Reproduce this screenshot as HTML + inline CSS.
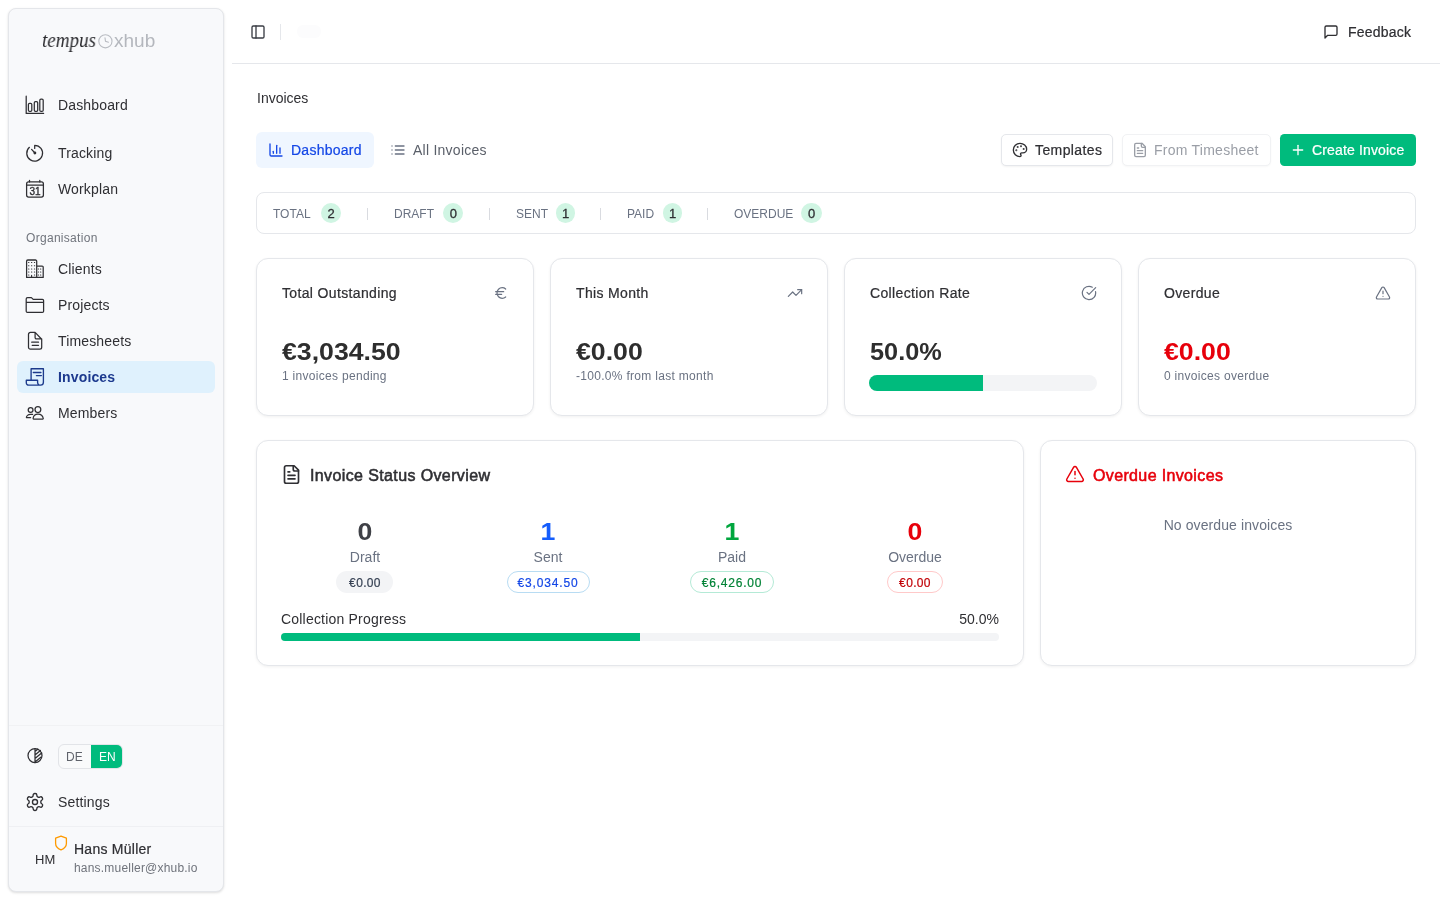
<!DOCTYPE html>
<html><head><meta charset="utf-8">
<style>
*{box-sizing:border-box;margin:0;padding:0}
html,body{width:1440px;height:900px;overflow:hidden;background:#fff;font-family:"Liberation Sans",sans-serif;color:#2e2e2e}
.a{position:absolute}
.t{position:absolute;white-space:nowrap;line-height:1;will-change:transform}
svg{position:absolute;overflow:visible;will-change:transform}
.sb{left:8px;top:8px;width:216px;height:884px;background:#f8f9fb;border:1px solid #e4e6ea;border-radius:8px;box-shadow:0 1px 3px rgba(0,0,0,.1),0 1px 2px rgba(0,0,0,.04)}
.nav{font-size:14px;color:#2f2f33;left:57.5px;letter-spacing:.15px}
.card{position:absolute;background:#fff;border:1px solid #e5e7eb;border-radius:12px;box-shadow:0 1px 3px rgba(0,0,0,.06)}
.m{-webkit-text-stroke:.22px currentColor}
.sbd{-webkit-text-stroke:.55px currentColor}
.ic{fill:none;stroke:currentColor;stroke-width:2;stroke-linecap:round;stroke-linejoin:round}
.si{fill:none;stroke:#2f2f33;stroke-width:1.25;stroke-linecap:round;stroke-linejoin:round}
</style></head>
<body>
<!-- SIDEBAR -->
<div class="a sb"></div>
<div class="t" style="left:41.5px;top:29.5px;font-family:'Liberation Serif',serif;font-style:italic;font-size:20px;color:#2a2a2e;transform:scaleX(.95);transform-origin:0 0">tempus</div>
<svg style="left:98px;top:33.5px" width="15" height="15" viewBox="0 0 15 15"><g fill="none" stroke="#b9bcc2" stroke-width="1.1" stroke-linecap="round"><circle cx="7.4" cy="7.3" r="6.6"/><path d="M7 3.8L7.5 7.3 10.5 8.2"/></g></svg>
<div class="t" style="left:114px;top:31px;font-size:19px;color:#b4b7bd;font-weight:normal">xhub</div>

<!-- nav icons -->
<svg class="si" style="left:22px;top:92px" width="26" height="26" viewBox="0 0 26 26"><path d="M4.2 4.2V21.4H21.6"/><rect x="6.4" y="11.4" width="3.4" height="8" rx="1.2"/><rect x="12.3" y="9.5" width="3.4" height="9.9" rx="1.2"/><rect x="17.8" y="7" width="3.4" height="12.4" rx="1.2"/></svg>
<div class="t nav" style="top:98.15px">Dashboard</div>
<svg class="si" style="left:22px;top:140px" width="26" height="26" viewBox="0 0 26 26"><path d="M12.7 8.4V5.3A7.9 7.9 0 1 1 7.4 7.3"/><path d="M9.6 9.4L12.9 13"/><circle cx="12.9" cy="13" r=".8" fill="#2f2f33"/></svg>
<div class="t nav" style="top:146.15px">Tracking</div>
<svg class="si" style="left:22px;top:176px" width="26" height="26" viewBox="0 0 26 26"><rect x="4.6" y="5.9" width="16.8" height="15.2" rx="2"/><path d="M4.6 9.2H21.4M7.5 4.3v1.6M17.8 4.3v1.6"/><text x="13.1" y="18.9" text-anchor="middle" font-family="Liberation Sans" font-size="10" fill="#2f2f33" stroke="#2f2f33" stroke-width=".35">31</text></svg>
<div class="t nav" style="top:182.15px">Workplan</div>

<div class="t" style="left:25.5px;top:231.8px;font-size:12px;color:#70747c;letter-spacing:.3px">Organisation</div>

<svg class="si" style="left:22px;top:256px" width="26" height="26" viewBox="0 0 26 26"><path d="M4.6 21.4V5.2a1.2 1.2 0 0 1 1.2-1.2h7.7a1.2 1.2 0 0 1 1.2 1.2V21.4M14.7 10.1h5.4a1.1 1.1 0 0 1 1.1 1.1v10.2H4.6"/><g stroke-width="1.1"><path d="M6.6 6.5h.3M9.5 6.5h.3M12.4 6.5h.3M6.6 9.8h.3M9.5 9.8h.3M12.4 9.8h.3M6.6 13h.3M9.5 13h.3M12.4 13h.3M6.6 16h.3M9.5 16h.3M12.4 16h.3M6.6 19h.3M12.4 19h.3M16.3 13h.3M18.5 13h.3M16.3 16h.3M18.5 16h.3M16.3 19h.3M18.5 19h.3M9.6 19.2v2"/></g></svg>
<div class="t nav" style="top:261.85px">Clients</div>
<svg class="si" style="left:22px;top:292px" width="26" height="26" viewBox="0 0 26 26"><path d="M4.2 19.2V7a1.4 1.4 0 0 1 1.4-1.4h3.8l1.8 1.8h9.2a1.2 1.2 0 0 1 1.2 1.2v10.6a1.2 1.2 0 0 1-1.2 1.2H5.4a1.2 1.2 0 0 1-1.2-1.2zM4.2 10.4H21.6"/></svg>
<div class="t nav" style="top:297.85px">Projects</div>
<svg class="si" style="left:22px;top:328px" width="26" height="26" viewBox="0 0 26 26"><path d="M13.1 4.4H8.4a1.9 1.9 0 0 0-1.9 1.9v13a1.9 1.9 0 0 0 1.9 1.9h9.4a1.9 1.9 0 0 0 1.9-1.9v-8.1zM13.1 4.4v5.2a1.3 1.3 0 0 0 1.3 1.3h5.3M9.7 14.2h6.8M10.2 17.3h6.3"/></svg>
<div class="t nav" style="top:333.85px">Timesheets</div>

<div class="a" style="left:17px;top:361px;width:198px;height:32px;background:#dff1fd;border-radius:6px"></div>
<svg class="si" style="left:22px;top:364px;stroke:#1c3a8c;stroke-width:1.35" width="26" height="26" viewBox="0 0 26 26"><path d="M9.1 16V4.7H21.4V18.2a2.9 2.9 0 0 1-2.9 2.9H6.6A2.3 2.3 0 0 1 4.3 18.8V16.2H15.6v2.2a2.7 2.7 0 0 0 2.9 2.7"/><path d="M11.3 8.5h7.6M14.4 11.6h5"/></svg>
<div class="t nav" style="top:369.85px;color:#1c398e;font-weight:bold">Invoices</div>
<svg class="si" style="left:22px;top:400px" width="26" height="26" viewBox="0 0 26 26"><circle cx="8.6" cy="10" r="2.4"/><circle cx="15.9" cy="9.6" r="2.9"/><path d="M10.6 14.4H8.4C6 14.4 4.4 15.9 4.4 17.6H8.6M11.1 18.5c.3-2.6 2.3-4.3 4.9-4.3s4.8 1.7 5.3 4.3c0 .3-.2.5-.5.5H11.5c-.3 0-.4-.2-.4-.5z"/></svg>
<div class="t nav" style="top:405.85px">Members</div>

<!-- sidebar footer -->
<div class="a" style="left:9px;top:725px;width:214px;height:1px;background:#f1f2f4"></div>
<svg class="si" style="left:22px;top:742px" width="26" height="26" viewBox="0 0 26 26"><circle cx="13" cy="13.6" r="7"/><path d="M13 6.6v14M13 9.5l2.7-2.3M13 13l5.4-4.6M13 16.5l6.6-5.6M13.6 19.6l5.2-4.4"/></svg>
<div class="a" style="left:57.5px;top:743.5px;width:65px;height:25px;border:1px solid #e2e4e8;border-radius:6px;background:#f9fafb;overflow:hidden">
  <div class="a" style="left:32px;top:-1px;width:33px;height:25px;background:#00bb7d;border-radius:0 6px 6px 0"></div>
</div>
<div class="t" style="left:66.4px;top:750.5px;font-size:12px;color:#5f636b">DE</div>
<div class="t" style="left:98.5px;top:750.5px;font-size:12px;color:#fff">EN</div>
<svg class="si" style="left:22px;top:789px" width="26" height="26" viewBox="0 0 24 24" ><g transform="translate(12 12) scale(0.78) translate(-12 -12)" stroke-width="1.6"><path d="M12.22 2h-.44a2 2 0 0 0-2 2v.18a2 2 0 0 1-1 1.73l-.43.25a2 2 0 0 1-2 0l-.15-.08a2 2 0 0 0-2.73.73l-.22.38a2 2 0 0 0 .73 2.73l.15.1a2 2 0 0 1 1 1.72v.51a2 2 0 0 1-1 1.74l-.15.09a2 2 0 0 0-.73 2.73l.22.38a2 2 0 0 0 2.73.73l.15-.08a2 2 0 0 1 2 0l.43.25a2 2 0 0 1 1 1.73V20a2 2 0 0 0 2 2h.44a2 2 0 0 0 2-2v-.18a2 2 0 0 1 1-1.730l.43-.25a2 2 0 0 1 2 0l.15.08a2 2 0 0 0 2.73-.73l.22-.39a2 2 0 0 0-.73-2.73l-.15-.08a2 2 0 0 1-1-1.74v-.5a2 2 0 0 1 1-1.74l.15-.09a2 2 0 0 0 .73-2.73l-.22-.38a2 2 0 0 0-2.73-.73l-.15.08a2 2 0 0 1-2 0l-.43-.25a2 2 0 0 1-1-1.73V4a2 2 0 0 0-2-2z"/><circle cx="12" cy="12" r="3"/></g></svg>
<div class="t nav" style="top:794.95px">Settings</div>
<div class="a" style="left:9px;top:826px;width:214px;height:1px;background:#eff0f3"></div>
<div class="t" style="left:34.5px;top:852.8px;font-size:13px;color:#2f2f33">HM</div>
<svg style="left:54px;top:835px" width="14" height="16" viewBox="0 0 14 16"><path d="M7 1.2L12.4 3.2V8.4C12.4 11.4 10 13.6 7 14.8 4 13.6 1.6 11.4 1.6 8.4V3.2z" fill="none" stroke="#fe9a00" stroke-width="1.3" stroke-linejoin="round"/></svg>
<div class="t m" style="left:73.6px;top:842px;font-size:14px;color:#2f2f33;letter-spacing:.25px">Hans Müller</div>
<div class="t" style="left:73.6px;top:862.4px;font-size:12px;color:#6f737b;letter-spacing:.2px">hans.mueller@xhub.io</div>

<!-- HEADER -->
<div class="a" style="left:232px;top:63px;width:1208px;height:1px;background:#e5e7eb"></div>
<svg class="ic" style="left:250px;top:23.5px;color:#3a3d44;stroke-width:2" width="16" height="16" viewBox="0 0 24 24"><rect width="18" height="18" x="3" y="3" rx="2"/><path d="M9 3v18"/></svg>
<div class="a" style="left:280px;top:23.5px;width:1px;height:16px;background:#e5e7eb"></div>
<div class="a" style="left:297px;top:25px;width:24px;height:13px;background:#fcfcfd;border-radius:6px"></div>
<svg class="ic" style="left:1323px;top:23.5px;color:#2f2f33" width="16" height="16" viewBox="0 0 24 24"><path d="M21 15a2 2 0 0 1-2 2H7l-4 4V5a2 2 0 0 1 2-2h14a2 2 0 0 1 2 2z"/></svg>
<div class="t m" style="left:1348px;top:24.7px;font-size:14px;color:#2f2f33;letter-spacing:.2px">Feedback</div>

<!-- PAGE TITLE -->
<div class="t" style="left:256.5px;top:91px;font-size:14px;color:#2f2f33">Invoices</div>

<!-- TABS -->
<div class="a" style="left:256px;top:132px;width:118px;height:36px;background:#eff6ff;border-radius:6px"></div>
<svg class="ic" style="left:267.7px;top:142.4px;color:#1447e6" width="16" height="16" viewBox="0 0 24 24"><path d="M3 3v16a2 2 0 0 0 2 2h16"/><path d="M18 17V9"/><path d="M13 17V5"/><path d="M8 17v-3"/></svg>
<div class="t m" style="left:290.5px;top:143px;font-size:14px;color:#1447e6;letter-spacing:.25px">Dashboard</div>
<svg class="ic" style="left:390px;top:142px;color:#6a7282" width="16" height="16" viewBox="0 0 24 24"><path d="M3 12h.01"/><path d="M3 18h.01"/><path d="M3 6h.01"/><path d="M8 12h13"/><path d="M8 18h13"/><path d="M8 6h13"/></svg>
<div class="t" style="left:412.8px;top:143px;font-size:14px;color:#5a5f69;letter-spacing:.25px">All Invoices</div>

<!-- ACTION BUTTONS -->
<div class="a" style="left:1000.5px;top:134px;width:112.5px;height:32px;border:1px solid #e5e7eb;border-radius:5px;background:#fff;box-shadow:0 1px 2px rgba(0,0,0,.05)"></div>
<svg class="ic" style="left:1011.5px;top:142px;color:#2f2f33" width="16" height="16" viewBox="0 0 24 24"><circle cx="13.5" cy="6.5" r=".5" fill="currentColor"/><circle cx="17.5" cy="10.5" r=".5" fill="currentColor"/><circle cx="8.5" cy="7.5" r=".5" fill="currentColor"/><circle cx="6.5" cy="12.5" r=".5" fill="currentColor"/><path d="M12 2C6.5 2 2 6.5 2 12s4.5 10 10 10c.926 0 1.648-.746 1.648-1.688 0-.437-.18-.835-.437-1.125-.29-.289-.438-.652-.438-1.125a1.64 1.64 0 0 1 1.668-1.668h1.996c3.051 0 5.555-2.503 5.555-5.554C21.965 6.012 17.461 2 12 2z"/></svg>
<div class="t m" style="left:1034.6px;top:143px;font-size:14px;color:#2f2f33;letter-spacing:.4px">Templates</div>

<div class="a" style="left:1121.5px;top:134px;width:149.5px;height:32px;border:1px solid #f1f2f4;border-radius:5px;background:#fff;box-shadow:0 1px 2px rgba(0,0,0,.03)"></div>
<svg class="ic" style="left:1132px;top:142px;color:#9a9ea6" width="16" height="16" viewBox="0 0 24 24"><path d="M15 2H6a2 2 0 0 0-2 2v16a2 2 0 0 0 2 2h12a2 2 0 0 0 2-2V7Z"/><path d="M14 2v4a2 2 0 0 0 2 2h4"/><path d="M10 9H8"/><path d="M16 13H8"/><path d="M16 17H8"/></svg>
<div class="t" style="left:1154.4px;top:143px;font-size:14px;color:#9a9ea6;letter-spacing:.25px">From Timesheet</div>

<div class="a" style="left:1279.5px;top:134px;width:136.5px;height:32px;border-radius:4.5px;background:#00bb7d"></div>
<svg class="ic" style="left:1290px;top:142px;color:#fff" width="16" height="16" viewBox="0 0 24 24"><path d="M5 12h14"/><path d="M12 5v14"/></svg>
<div class="t m" style="left:1312px;top:143px;font-size:14px;color:#fff;letter-spacing:.15px">Create Invoice</div>

<!-- STATS BAR -->
<div class="a" style="left:256px;top:192px;width:1160px;height:42px;border:1px solid #e5e7eb;border-radius:8px;background:#fff"></div>
<div class="t" style="left:273.3px;top:207.8px;font-size:12px;color:#6a7282;letter-spacing:0px">TOTAL</div>
<div class="a" style="left:321.2px;top:203px;width:20.1px;height:20px;border-radius:10px;background:#d0f5e3"></div>
<div class="t" style="left:321.2px;top:207px;width:20.1px;text-align:center;font-size:13px;color:#2f2f33;-webkit-text-stroke:.3px #2f2f33">2</div>
<div class="t" style="left:393.7px;top:207.8px;font-size:12px;color:#6a7282;letter-spacing:0px">DRAFT</div>
<div class="a" style="left:442.5px;top:203px;width:20.8px;height:20px;border-radius:10px;background:#d0f5e3"></div>
<div class="t" style="left:442.5px;top:207px;width:20.8px;text-align:center;font-size:13px;color:#2f2f33;-webkit-text-stroke:.3px #2f2f33">0</div>
<div class="t" style="left:515.6px;top:207.8px;font-size:12px;color:#6a7282;letter-spacing:0px">SENT</div>
<div class="a" style="left:555.7px;top:203px;width:19.4px;height:20px;border-radius:10px;background:#d0f5e3"></div>
<div class="t" style="left:555.7px;top:207px;width:19.4px;text-align:center;font-size:13px;color:#2f2f33;-webkit-text-stroke:.3px #2f2f33">1</div>
<div class="t" style="left:626.7px;top:207.8px;font-size:12px;color:#6a7282;letter-spacing:0px">PAID</div>
<div class="a" style="left:662.8px;top:203px;width:19.4px;height:20px;border-radius:10px;background:#d0f5e3"></div>
<div class="t" style="left:662.8px;top:207px;width:19.4px;text-align:center;font-size:13px;color:#2f2f33;-webkit-text-stroke:.3px #2f2f33">1</div>
<div class="t" style="left:734px;top:207.8px;font-size:12px;color:#6a7282;letter-spacing:0px">OVERDUE</div>
<div class="a" style="left:801px;top:203px;width:21.2px;height:20px;border-radius:10px;background:#d0f5e3"></div>
<div class="t" style="left:801px;top:207px;width:21.2px;text-align:center;font-size:13px;color:#2f2f33;-webkit-text-stroke:.3px #2f2f33">0</div>
<div class="a" style="left:367.0px;top:208px;width:1px;height:12px;background:#d9dbe0"></div>
<div class="a" style="left:488.7px;top:208px;width:1px;height:12px;background:#d9dbe0"></div>
<div class="a" style="left:600.2px;top:208px;width:1px;height:12px;background:#d9dbe0"></div>
<div class="a" style="left:707.1px;top:208px;width:1px;height:12px;background:#d9dbe0"></div>
<div class="card" style="left:256px;top:258px;width:278px;height:158px"></div>
<div class="t m" style="left:282px;top:286.35px;font-size:14px;color:#2f2f33;letter-spacing:.35px">Total Outstanding</div>
<svg class="ic" style="left:493px;top:285px;color:#6a7282;stroke-width:1.8" width="16" height="16" viewBox="0 0 24 24"><path d="M4 10h12"/><path d="M4 14h9"/><path d="M19 6a7.7 7.7 0 0 0-5.2-2A7.9 7.9 0 0 0 6 12c0 4.4 3.5 8 7.8 8 2 0 3.8-.8 5.2-2"/></svg>
<div class="t" style="left:282px;top:341px;font-size:23px;font-weight:bold;color:#2e2e2e;transform:scaleX(1.16);transform-origin:0 0">€3,034.50</div>
<div class="t" style="left:282px;top:369.84px;font-size:12px;color:#6a7282;letter-spacing:.3px">1 invoices pending</div>
<div class="card" style="left:550px;top:258px;width:278px;height:158px"></div>
<div class="t m" style="left:576px;top:286.35px;font-size:14px;color:#2f2f33;letter-spacing:.35px">This Month</div>
<svg class="ic" style="left:787px;top:285px;color:#6a7282;stroke-width:1.8" width="16" height="16" viewBox="0 0 24 24"><polyline points="22 7 13.5 15.5 8.5 10.5 2 17"/><polyline points="16 7 22 7 22 13"/></svg>
<div class="t" style="left:576px;top:341px;font-size:23px;font-weight:bold;color:#2e2e2e;transform:scaleX(1.16);transform-origin:0 0">€0.00</div>
<div class="t" style="left:576px;top:369.84px;font-size:12px;color:#6a7282;letter-spacing:.3px">-100.0% from last month</div>
<div class="card" style="left:844px;top:258px;width:278px;height:158px"></div>
<div class="t m" style="left:870px;top:286.35px;font-size:14px;color:#2f2f33;letter-spacing:.35px">Collection Rate</div>
<svg class="ic" style="left:1081px;top:285px;color:#6a7282;stroke-width:1.8" width="16" height="16" viewBox="0 0 24 24"><path d="M21.801 10A10 10 0 1 1 17 3.335"/><path d="m9 11 3 3L22 4"/></svg>
<div class="t" style="left:870px;top:341px;font-size:23px;font-weight:bold;color:#2e2e2e;transform:scaleX(1.10);transform-origin:0 0">50.0%</div>
<div class="card" style="left:1138px;top:258px;width:278px;height:158px"></div>
<div class="t m" style="left:1164px;top:286.35px;font-size:14px;color:#2f2f33;letter-spacing:.35px">Overdue</div>
<svg class="ic" style="left:1375px;top:285px;color:#6a7282;stroke-width:1.8" width="16" height="16" viewBox="0 0 24 24"><path d="m21.73 18-8-14a2 2 0 0 0-3.48 0l-8 14A2 2 0 0 0 4 21h16a2 2 0 0 0 1.73-3"/><path d="M12 9v4"/><path d="M12 17h.01"/></svg>
<div class="t" style="left:1164px;top:341px;font-size:23px;font-weight:bold;color:#e7000b;transform:scaleX(1.16);transform-origin:0 0">€0.00</div>
<div class="t" style="left:1164px;top:369.84px;font-size:12px;color:#6a7282;letter-spacing:.3px">0 invoices overdue</div>
<div class="a" style="left:869px;top:375px;width:228px;height:16px;border-radius:8px;background:#f3f4f6;overflow:hidden"><div class="a" style="left:0;top:0;width:114px;height:16px;background:#00bb7d"></div></div>
<div class="card" style="left:256px;top:440px;width:768px;height:226px"></div>
<svg class="ic" style="left:280.5px;top:464.2px;color:#2f2f33;stroke-width:1.9" width="21" height="21" viewBox="0 0 24 24"><path d="M15 2H6a2 2 0 0 0-2 2v16a2 2 0 0 0 2 2h12a2 2 0 0 0 2-2V7Z"/><path d="M14 2v4a2 2 0 0 0 2 2h4"/><path d="M10 9H8"/><path d="M16 13H8"/><path d="M16 17H8"/></svg>
<div class="t sbd" style="left:309.6px;top:468px;font-size:16px;color:#2f2f33;letter-spacing:.38px">Invoice Status Overview</div>
<div class="t" style="left:304.75px;width:120px;text-align:center;top:521.4px;font-size:23px;font-weight:bold;transform:scaleX(1.16);color:#3f4147">0</div>
<div class="t" style="left:304.75px;width:120px;text-align:center;top:549.65px;font-size:14px;color:#6a7282">Draft</div>
<div class="a" style="left:336.25px;top:571px;width:57px;height:22px;border-radius:11px;background:#f3f4f6;"></div>
<div class="t" style="left:304.75px;width:120px;text-align:center;top:576.64px;font-size:12px;letter-spacing:.35px;-webkit-text-stroke:.2px currentColor;color:#364153">€0.00</div>
<div class="t" style="left:488.25px;width:120px;text-align:center;top:521.4px;font-size:23px;font-weight:bold;transform:scaleX(1.16);color:#155dfc">1</div>
<div class="t" style="left:488.25px;width:120px;text-align:center;top:549.65px;font-size:14px;color:#6a7282">Sent</div>
<div class="a" style="left:506.75px;top:571px;width:83px;height:22px;border-radius:11px;background:#fff;border:1px solid #b8dcf3;"></div>
<div class="t" style="left:488.25px;width:120px;text-align:center;top:576.64px;font-size:12px;letter-spacing:.85px;-webkit-text-stroke:.2px currentColor;color:#1447e6">€3,034.50</div>
<div class="t" style="left:671.75px;width:120px;text-align:center;top:521.4px;font-size:23px;font-weight:bold;transform:scaleX(1.16);color:#00a63e">1</div>
<div class="t" style="left:671.75px;width:120px;text-align:center;top:549.65px;font-size:14px;color:#6a7282">Paid</div>
<div class="a" style="left:689.5px;top:571px;width:84.5px;height:22px;border-radius:11px;background:#fff;border:1px solid #b4ead6;"></div>
<div class="t" style="left:671.75px;width:120px;text-align:center;top:576.64px;font-size:12px;letter-spacing:.8px;-webkit-text-stroke:.2px currentColor;color:#008236">€6,426.00</div>
<div class="t" style="left:855.25px;width:120px;text-align:center;top:521.4px;font-size:23px;font-weight:bold;transform:scaleX(1.16);color:#e7000b">0</div>
<div class="t" style="left:855.25px;width:120px;text-align:center;top:549.65px;font-size:14px;color:#6a7282">Overdue</div>
<div class="a" style="left:887.05px;top:571px;width:56.4px;height:22px;border-radius:11px;background:#fff;border:1px solid #ffc9c9;"></div>
<div class="t" style="left:855.25px;width:120px;text-align:center;top:576.64px;font-size:12px;letter-spacing:.35px;-webkit-text-stroke:.2px currentColor;color:#c10007">€0.00</div>
<div class="t" style="left:281px;top:611.8px;font-size:14px;color:#2f2f33;letter-spacing:.2px">Collection Progress</div>
<div class="t" style="left:899px;width:100px;text-align:right;top:611.8px;font-size:14px;color:#2f2f33">50.0%</div>
<div class="a" style="left:281px;top:633px;width:718px;height:8px;border-radius:4px;background:#f3f4f6;overflow:hidden"><div class="a" style="left:0;top:0;width:359px;height:8px;background:#00bb7d"></div></div>
<div class="card" style="left:1040px;top:440px;width:376px;height:226px"></div>
<svg class="ic" style="left:1064.5px;top:464px;color:#e7000b;stroke-width:1.8" width="20" height="20" viewBox="0 0 24 24"><path d="m21.73 18-8-14a2 2 0 0 0-3.48 0l-8 14A2 2 0 0 0 4 21h16a2 2 0 0 0 1.73-3"/><path d="M12 9v4"/><path d="M12 17h.01"/></svg>
<div class="t sbd" style="left:1093.2px;top:467.56px;font-size:16px;color:#e7000b;letter-spacing:.36px">Overdue Invoices</div>
<div class="t" style="left:1128px;width:200px;text-align:center;top:518px;font-size:14px;color:#6a7282;letter-spacing:.1px">No overdue invoices</div>

</body></html>
